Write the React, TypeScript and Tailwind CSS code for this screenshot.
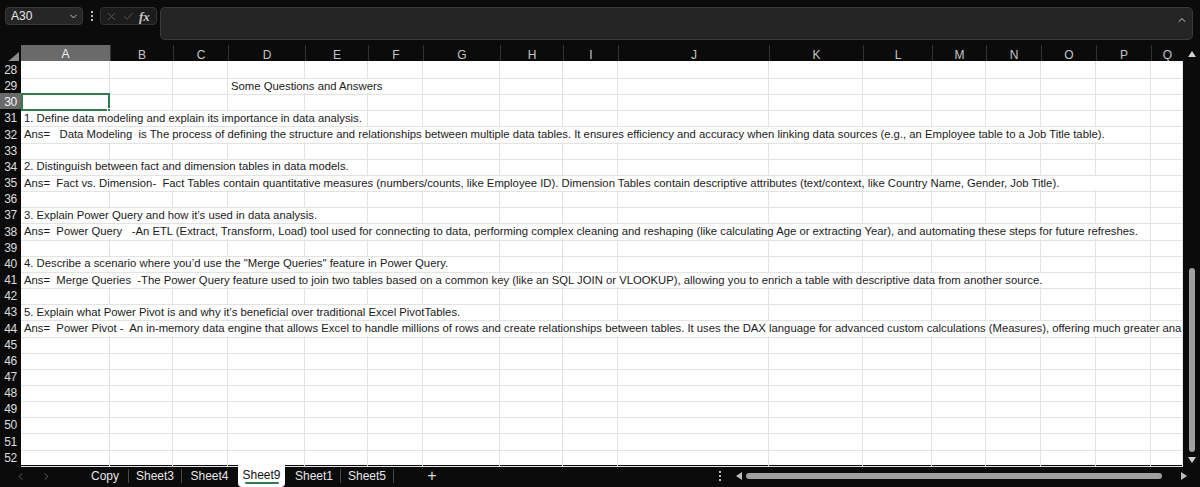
import { Check, ChevronDown, ChevronLeft, ChevronRight, ChevronUp, X } from 'lucide-react';

// column template: row header + A..Q
const GRID =
  'grid grid-cols-[21px_89px_63px_55px_77px_63px_55px_77px_63px_55px_151px_94px_69px_54px_55px_55px_55px_32px]';

const LETTERS = ['A', 'B', 'C', 'D', 'E', 'F', 'G', 'H', 'I', 'J', 'K', 'L', 'M', 'N', 'O', 'P', 'Q'];

const SPAN: Record<number, string> = {
  1: 'col-span-1',
  2: 'col-span-2',
  3: 'col-span-3',
  4: 'col-span-4',
  5: 'col-span-5',
  6: 'col-span-6',
  7: 'col-span-7',
  8: 'col-span-8',
  9: 'col-span-9',
  10: 'col-span-10',
  11: 'col-span-11',
  12: 'col-span-12',
  13: 'col-span-13',
  14: 'col-span-14',
  15: 'col-span-15',
  16: 'col-span-16',
  17: 'col-span-17',
};

type Cell = { from: number; to: number; text: string };

// text overflows into the next cells, so gridlines are hidden up to "to"
const CELLS: Record<number, Cell> = {
  29: { from: 3, to: 5, text: 'Some Questions and Answers' },
  31: { from: 0, to: 4, text: '1. Define data modeling and explain its importance in data analysis.' },
  32: {
    from: 0,
    to: 15,
    text: 'Ans=   Data Modeling  is The process of defining the structure and relationships between multiple data tables. It ensures efficiency and accuracy when linking data sources (e.g., an Employee table to a Job Title table).',
  },
  34: { from: 0, to: 4, text: '2. Distinguish between fact and dimension tables in data models.' },
  35: {
    from: 0,
    to: 15,
    text: 'Ans=  Fact vs. Dimension-  Fact Tables contain quantitative measures (numbers/counts, like Employee ID). Dimension Tables contain descriptive attributes (text/context, like Country Name, Gender, Job Title).',
  },
  37: { from: 0, to: 4, text: '3. Explain Power Query and how it\u2019s used in data analysis.' },
  38: {
    from: 0,
    to: 15,
    text: 'Ans=  Power Query   -An ETL (Extract, Transform, Load) tool used for connecting to data, performing complex cleaning and reshaping (like calculating Age or extracting Year), and automating these steps for future refreshes.',
  },
  40: { from: 0, to: 6, text: '4. Describe a scenario where you\u2019d use the "Merge Queries" feature in Power Query.' },
  41: {
    from: 0,
    to: 14,
    text: 'Ans=  Merge Queries  -The Power Query feature used to join two tables based on a common key (like an SQL JOIN or VLOOKUP), allowing you to enrich a table with descriptive data from another source.',
  },
  43: { from: 0, to: 6, text: '5. Explain what Power Pivot is and why it\u2019s beneficial over traditional Excel PivotTables.' },
  44: {
    from: 0,
    to: 16,
    text: 'Ans=  Power Pivot -  An in-memory data engine that allows Excel to handle millions of rows and create relationships between tables. It uses the DAX language for advanced custom calculations (Measures), offering much greater analytical power.',
  },
};

const ROWS = Array.from({ length: 25 }, (_, i) => 28 + i);

function Dots() {
  return (
    <div className="flex flex-col gap-[2px] items-center">
      <span className="w-[2px] h-[2px] bg-[#bdbdbd]" />
      <span className="w-[2px] h-[2px] bg-[#bdbdbd]" />
      <span className="w-[2px] h-[2px] bg-[#bdbdbd]" />
    </div>
  );
}

function TopBar() {
  return (
    <div className="h-[45px] flex items-start pt-[7px] pl-[5px] pr-[7px]">
      <div className="w-[78px] h-[18px] rounded-[4px] bg-[#262626] border border-[#3a3a3a] flex items-center justify-between pl-[5px] pr-[3px] text-[12px] text-[#e8e8e8]">
        <span>A30</span>
        <ChevronDown size={11} strokeWidth={2} className="text-[#cfcfcf]" />
      </div>
      <div className="w-[17px] h-[18px] flex items-center justify-center">
        <Dots />
      </div>
      <div className="w-[57px] h-[18px] rounded-[4px] bg-[#1c1c1c] border border-[#333] flex items-center gap-[4px] pl-[4px]">
        <X size={13} strokeWidth={1.3} className="text-[#6b6b6b]" />
        <Check size={13} strokeWidth={1.3} className="text-[#6b6b6b]" />
        <span className="font-['Liberation_Serif',serif] italic font-bold text-[13px] text-[#c8c8c8] leading-none">fx</span>
      </div>
      <div className="ml-[3px] flex-1 h-[33px] rounded-[5px] bg-[#242424] border border-[#3a3a3a] flex justify-end pt-[6px] pr-[4px]">
        <ChevronUp size={12} strokeWidth={2} className="text-[#d0d0d0]" />
      </div>
    </div>
  );
}

function HeaderRow() {
  return (
    <div className={`${GRID} h-[16px] text-[12px] text-[#c4c4c4]`}>
      <div className="flex items-end justify-end pr-[2px] pb-[2px]">
        <svg width="13" height="11" viewBox="0 0 13 11">
          <polygon points="13,0 13,11 0,11" fill="#8a8a8a" />
        </svg>
      </div>
      {LETTERS.map((l, i) => (
        <div
          key={l}
          className={
            i === 0
              ? 'flex items-center justify-center bg-[#6a6a6a] text-[#f0f0f0] border-b-2 border-[#3d8c5d]'
              : 'flex items-center justify-center border-l border-[#333]'
          }
        >
          {l}
        </div>
      ))}
    </div>
  );
}

function SheetRow({ n }: { n: number }) {
  const cell = CELLS[n];
  const items = [];
  let c = 0;
  while (c < LETTERS.length) {
    if (cell && c === cell.from) {
      items.push(
        <div
          key={c}
          className={`${SPAN[cell.to - cell.from + 1]} border-r border-b border-[#e3e3e3] overflow-hidden whitespace-pre flex items-center pl-[3px] pt-[1px]`}
        >
          {cell.text}
        </div>
      );
      c = cell.to + 1;
    } else if (n === 30 && c === 0) {
      items.push(
        <div key={c} className="relative border-2 border-[#2f7d4f]">
          <span className="absolute -right-[3px] -bottom-[3px] w-[4px] h-[4px] bg-[#2f7d4f] border border-white" />
        </div>
      );
      c++;
    } else {
      items.push(<div key={c} className="border-r border-b border-[#e3e3e3]" />);
      c++;
    }
  }
  return (
    <div className={`${GRID} flex-1 min-h-0`}>
      <div
        className={
          n === 30
            ? 'bg-[#6a6a6a] text-[#f4f4f4] flex items-center justify-center text-[12px] tracking-[-0.3px]'
            : 'bg-[#0a0a0a] text-[#dcdcdc] flex items-center justify-center text-[12px] tracking-[-0.3px]'
        }
      >
        {n}
      </div>
      {items}
    </div>
  );
}

function VScroll() {
  return (
    <div className="w-[17px] flex flex-col items-center">
      <svg width="8" height="6" viewBox="0 0 8 6" className="mt-[6px]">
        <polygon points="4,0 8,6 0,6" fill="#cfcfcf" />
      </svg>
      <div className="mt-[211px] w-[6px] h-[184px] rounded-full bg-[#9e9e9e]" />
      <svg width="8" height="6" viewBox="0 0 8 6" className="mt-[5px]">
        <polygon points="0,0 8,0 4,6" fill="#cfcfcf" />
      </svg>
    </div>
  );
}

function Sep() {
  return <div className="w-px h-[14px] bg-[#4a4a4a] self-center" />;
}

function TabBar() {
  return (
    <div className="h-[22px] flex items-stretch text-[12px] text-[#e6e6e6]">
      <div className="w-[82px] flex items-center gap-[15px] pl-[15px] text-[#8a8a8a]">
        <ChevronLeft size={11} strokeWidth={1.5} />
        <ChevronRight size={11} strokeWidth={1.5} />
      </div>
      <div className="w-[46px] flex items-center justify-center">Copy</div>
      <Sep />
      <div className="w-[52px] flex items-center justify-center">Sheet3</div>
      <Sep />
      <div className="w-[55px] flex items-center justify-center">Sheet4</div>
      <div className="ml-[1px] w-[47px] bg-white rounded-b-[4px] flex flex-col items-center justify-center text-[#111]">
        <span className="leading-[14px]">Sheet9</span>
        <span className="w-[34px] h-[2px] bg-[#2f7d4f] rounded-full" />
      </div>
      <div className="ml-[3px] w-[52px] flex items-center justify-center">Sheet1</div>
      <Sep />
      <div className="w-[52px] flex items-center justify-center">Sheet5</div>
      <Sep />
      <div className="w-[76px] flex items-center justify-center text-[16px] font-light text-[#d8d8d8]">+</div>
      <div className="ml-auto w-[487px] flex items-center">
        <div className="w-[14px] flex justify-center">
          <Dots />
        </div>
        <svg width="6" height="8" viewBox="0 0 6 8" className="ml-[9px]">
          <polygon points="6,0 6,8 0,4" fill="#bdbdbd" />
        </svg>
        <div className="ml-[4px] w-[416px] h-[6px] rounded-full bg-[#a0a0a0]" />
        <svg width="6" height="8" viewBox="0 0 6 8" className="ml-[19px]">
          <polygon points="0,0 6,4 0,8" fill="#bdbdbd" />
        </svg>
      </div>
    </div>
  );
}

export default function App() {
  return (
    <div className="w-[1200px] h-[487px] bg-[#0b0b0b] flex flex-col overflow-hidden font-['Liberation_Sans',Arial,sans-serif]">
      <TopBar />
      <div className="flex h-[420px]">
        <div className="w-[1183px] flex flex-col">
          <HeaderRow />
          <div className="h-[404px] flex flex-col bg-white text-[11.3px] text-[#1a1a1a]">
            {ROWS.map((n) => (
              <SheetRow key={n} n={n} />
            ))}
          </div>
        </div>
        <VScroll />
      </div>
      <TabBar />
    </div>
  );
}
